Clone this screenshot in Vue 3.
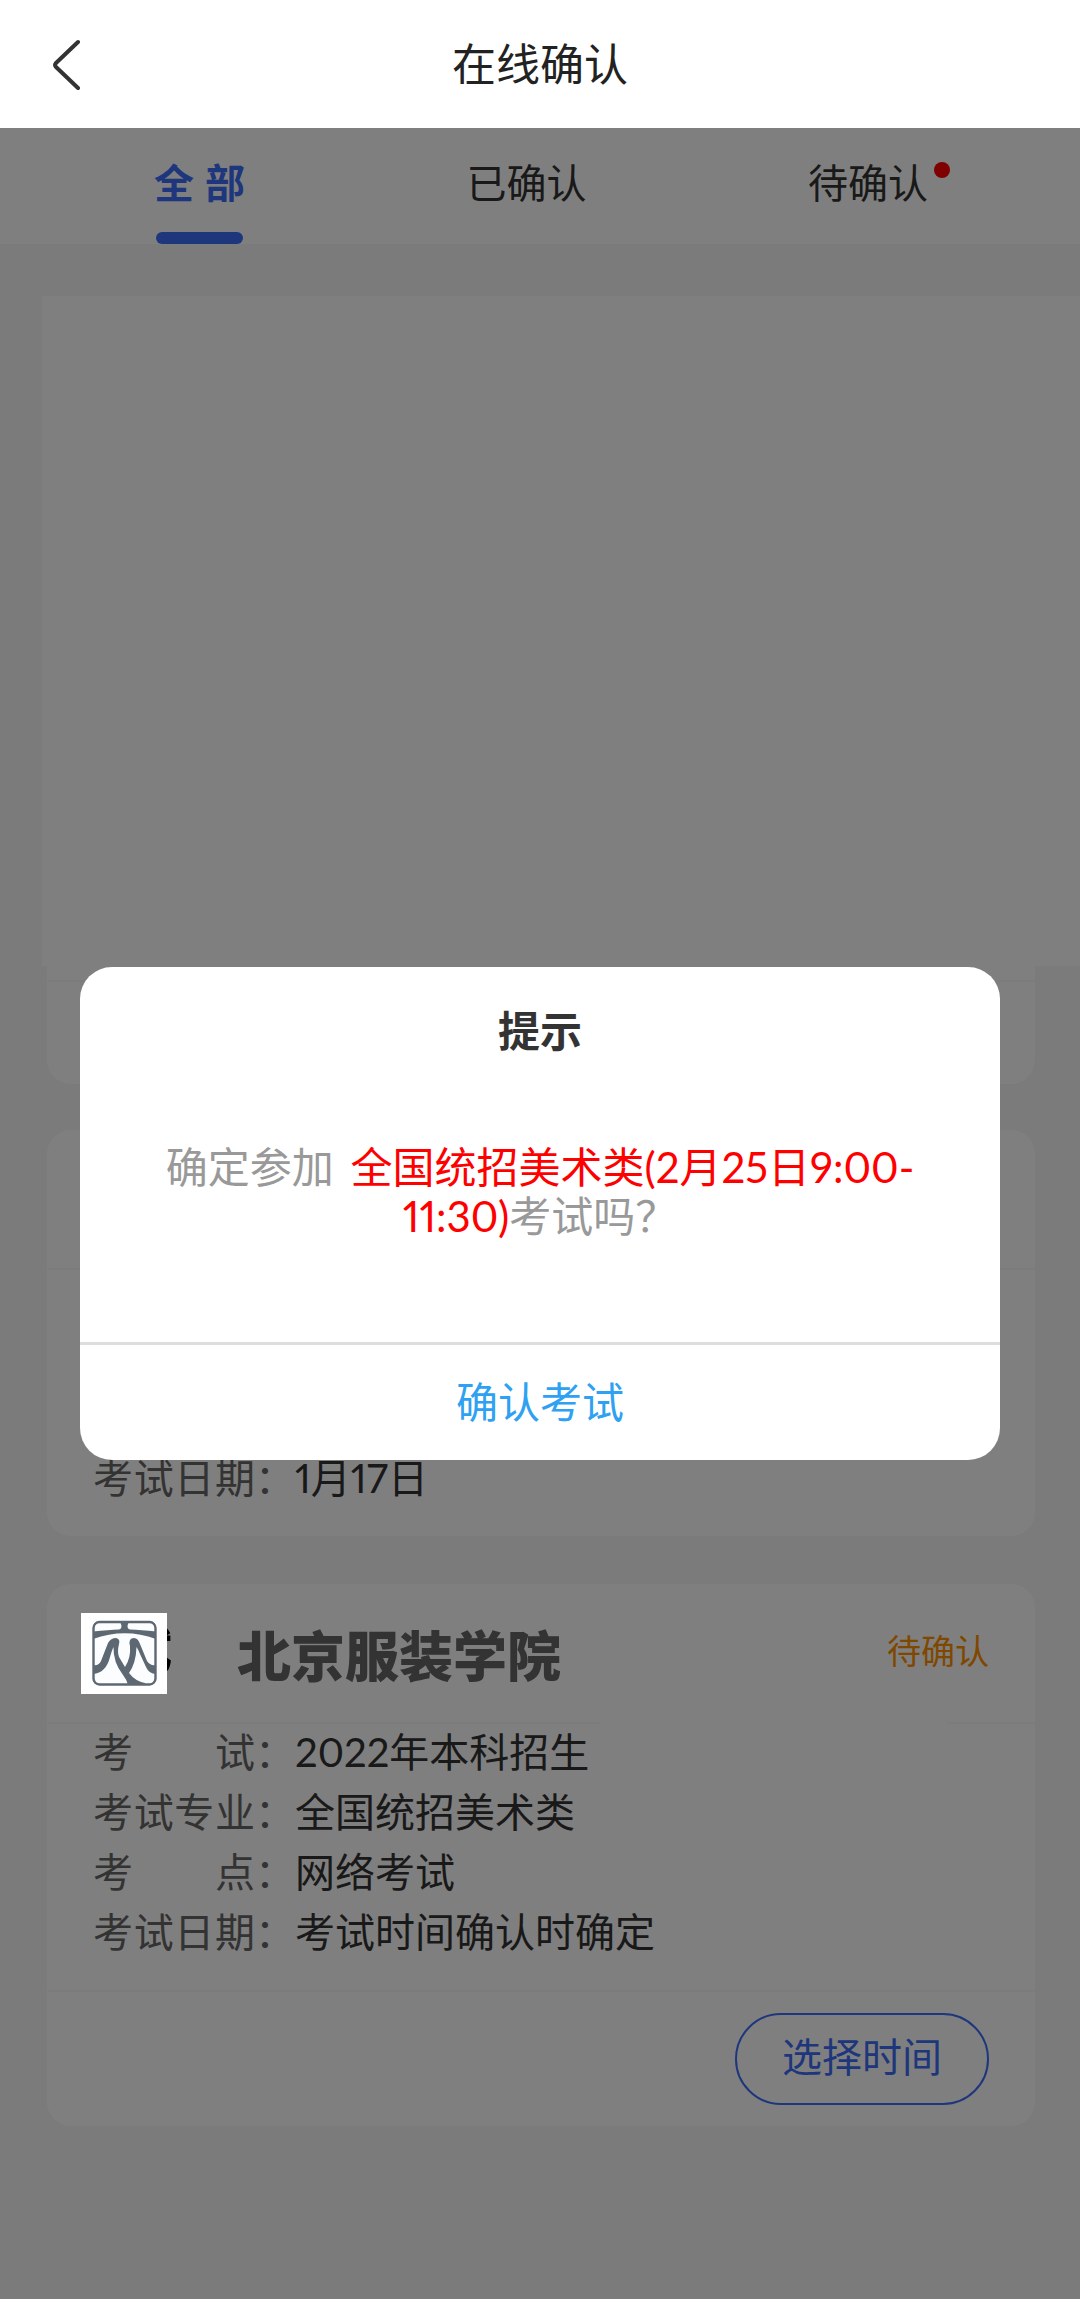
<template>
  <div class="page">
    <header class="header">
      <button class="back" aria-label="返回">
        <svg width="30" height="52" viewBox="0 0 30 52" fill="none" stroke="#333" stroke-width="4" stroke-linecap="round" stroke-linejoin="round">
          <path d="M26 4 L4 25 Q2 27 4 29 L26 50" />
        </svg>
      </button>
      <h1 class="header-title">在线确认</h1>
    </header>

    <nav class="tabs">
      <button
        v-for="tab in tabs"
        :key="tab.key"
        class="tab"
        :class="{ active: tab.key === activeTab, dot: tab.dot }"
        @click="activeTab = tab.key"
      >{{ tab.label }}</button>
    </nav>

    <main class="list">
      <div class="blank"></div>
      <section class="card card-tail">
        <div class="card-footer"></div>
      </section>

      <section v-for="item in exams" :key="item.id" class="card">
        <div class="card-head" :class="{ broken: item.school }">
          <template v-if="item.school">
            <span class="logo-wrap">
              <span class="logo-text" aria-hidden="true">试</span>
              <svg class="logo" viewBox="0 0 86 81" role="img" aria-label="校徽">
                <rect width="86" height="81" fill="#fff" />
                <rect x="12.5" y="9" width="62" height="62.5" rx="6" fill="#fbfdfe" stroke="#5d6873" stroke-width="2.4" />
                <path d="M12 18.5 Q28 17 38 16.5 Q40.5 16 40.5 13 Q40.5 10 38 9 H49 Q46.5 10 46.5 13 Q46.5 16 49 16.5 Q60 17 75 18.5 V26 Q44 14.5 12 26 Z" fill="#5d6873" />
                <path d="M12 52 Q18 53 20 48 L27 30 Q30 25 35 25 Q39.5 26 38 31 Q36 39 38 44 L44 54 Q50 45 49 33 Q47 25 53 25 Q57 25 59 31 L66 48 Q69 53 75 52 V61 Q68 61 65 54 L59 41 Q57 36 55.5 34 Q55 50 48 60 Q54 68 64 70 V72 H47 Q46 67 42 62 Q32 49 32.5 34 Q31 37 29 44 Q25 60 12 61 Z" fill="#5d6873" />
              </svg>
            </span>
            <h2 class="school">{{ item.school }}</h2>
            <span class="status">{{ item.status }}</span>
          </template>
        </div>
        <dl class="info">
          <div v-for="row in item.rows" :key="row.label" class="row">
            <dt>
              <span class="label"><span v-for="part in row.parts" :key="part">{{ part }}</span></span>：
            </dt>
            <dd>{{ row.value }}</dd>
          </div>
        </dl>
        <div v-if="item.action" class="card-footer">
          <button class="pick">{{ item.action }}</button>
        </div>
      </section>
    </main>

    <div class="mask">
      <div class="dialog" role="dialog" aria-labelledby="dialog-title">
        <h2 id="dialog-title" class="dialog-title">提示</h2>
        <p class="dialog-body">
          确定参加 <span class="highlight">全国统招美术类(2月25日9:00-11:30)</span>考试吗？
        </p>
        <button class="dialog-confirm">确认考试</button>
      </div>
    </div>
  </div>
</template>

<script setup>
import { ref } from 'vue';

const activeTab = ref('all');

const tabs = [
  { key: 'all', label: '全 部' },
  { key: 'done', label: '已确认' },
  { key: 'pending', label: '待确认', dot: true }
];

const makeRow = (label, value) => ({ label, value, parts: label.split('') });

const exams = [
  {
    id: 1,
    rows: [
      makeRow('考试', '2022年本科招生'),
      makeRow('考试专业', '美术类'),
      makeRow('考点', '网络考试'),
      makeRow('考试日期', '1月17日')
    ]
  },
  {
    id: 2,
    school: '北京服装学院',
    status: '待确认',
    action: '选择时间',
    rows: [
      makeRow('考试', '2022年本科招生'),
      makeRow('考试专业', '全国统招美术类'),
      makeRow('考点', '网络考试'),
      makeRow('考试日期', '考试时间确认时确定')
    ]
  }
];
</script>

<style>
body {
  margin: 0;
  background: #f6f6f6;
}
</style>

<style scoped>
.page {
  min-height: 100vh;
  background: #f6f6f6;
  color: #333;
  font-family: Lato, "Noto Sans CJK SC", sans-serif;
  font-size: 40px;
  font-variant-numeric: proportional-nums;
}

h1,
h2,
p,
dl,
dd {
  margin: 0;
}

button {
  padding: 0;
  border: none;
  background: none;
  color: inherit;
  font: inherit;
  cursor: pointer;
}

.header {
  position: relative;
  display: flex;
  align-items: center;
  justify-content: center;
  height: 128px;
  background: #fff;
}

.back {
  position: absolute;
  left: 52px;
  display: flex;
}

.header-title {
  padding-bottom: 4px;
  color: #222;
  font-size: 44px;
  font-weight: 400;
}

.tabs {
  display: flex;
  justify-content: space-between;
  height: 116px;
  padding: 0 152px 0 154px;
  background: #fff;
  font-family: "Liberation Sans", "Noto Sans CJK SC", sans-serif;
}

.tab {
  position: relative;
  padding-bottom: 4px;
  line-height: 112px;
}

.tab.active {
  color: #3d6df8;
  font-weight: 700;
}

.tab.active::after {
  content: '';
  position: absolute;
  left: 2px;
  right: 2px;
  bottom: 0;
  height: 12px;
  border-radius: 6px;
  background: #3d6df8;
}

.tab.dot::after {
  content: '';
  position: absolute;
  top: 34px;
  right: -22px;
  width: 16px;
  height: 16px;
  border-radius: 50%;
  background: #f00;
}

.list {
  padding: 52px 45px 48px 47px;
}

.blank {
  height: 670px;
  margin: 0 -45px 0 -5px;
  background: #fff;
}

.card {
  margin-bottom: 48px;
  border-radius: 24px;
  background: #fff;
}

.card-tail {
  margin-bottom: 46px;
  padding-top: 14px;
  border-radius: 0 0 24px 24px;
}

.card-head {
  display: flex;
  align-items: center;
  box-sizing: border-box;
  height: 140px;
  padding: 0 46px 0 34px;
  border-bottom: 2px solid #f8f8f8;
}

.card-head.broken {
  border-image: linear-gradient(to right, #f8f8f8 56%, #fff 56%, #fff 91%, #f8f8f8 91%) 1;
}

.logo-wrap {
  position: relative;
  display: flex;
  z-index: 3;
}

.logo {
  position: relative;
  width: 86px;
  height: 81px;
}

.logo-text {
  position: absolute;
  right: -5px;
  color: #000;
  font-size: 48px;
  font-weight: 700;
  line-height: 72px;
}

.school {
  flex: 1;
  margin-left: 70px;
  color: #666;
  font-size: 54px;
  font-weight: 900;
}

.status {
  padding-bottom: 8px;
  color: #ff9000;
  font-size: 34px;
}

.info {
  padding: 0 46px 26px;
}

.row {
  display: flex;
  padding-bottom: 4px;
  line-height: 56px;
}

dt {
  display: flex;
  width: 202px;
  color: #666;
}

.label {
  display: flex;
  justify-content: space-between;
  width: 162px;
}

.card-footer {
  display: flex;
  align-items: center;
  justify-content: flex-end;
  box-sizing: border-box;
  height: 136px;
  padding: 0 46px;
  border-top: 2px solid #f8f8f8;
}

.card-tail .card-footer {
  height: 104px;
}

.pick {
  box-sizing: border-box;
  width: 254px;
  height: 92px;
  padding-bottom: 8px;
  border: 2px solid #3d6df8;
  border-radius: 46px;
  color: #3d6df8;
}

.mask {
  position: fixed;
  inset: 128px 0 0;
  z-index: 2;
  display: flex;
  align-items: center;
  justify-content: center;
  background: rgba(0, 0, 0, 0.5);
}

.dialog {
  width: calc(100% - 160px);
  border-radius: 32px;
  background: #fff;
  font-size: 42px;
  text-align: center;
}

.dialog-title {
  padding: 32px 0;
  font-size: 42px;
  font-weight: 700;
  line-height: 64px;
}

.dialog-body {
  padding: 48px 72px 101px;
  color: #999;
  line-height: 49px;
}

.highlight {
  margin-left: 6px;
  color: #f00;
}

.dialog-confirm {
  width: 100%;
  height: 118px;
  padding-bottom: 6px;
  border-top: 3px solid #ddd;
  color: #2fa1f2;
}
</style>
